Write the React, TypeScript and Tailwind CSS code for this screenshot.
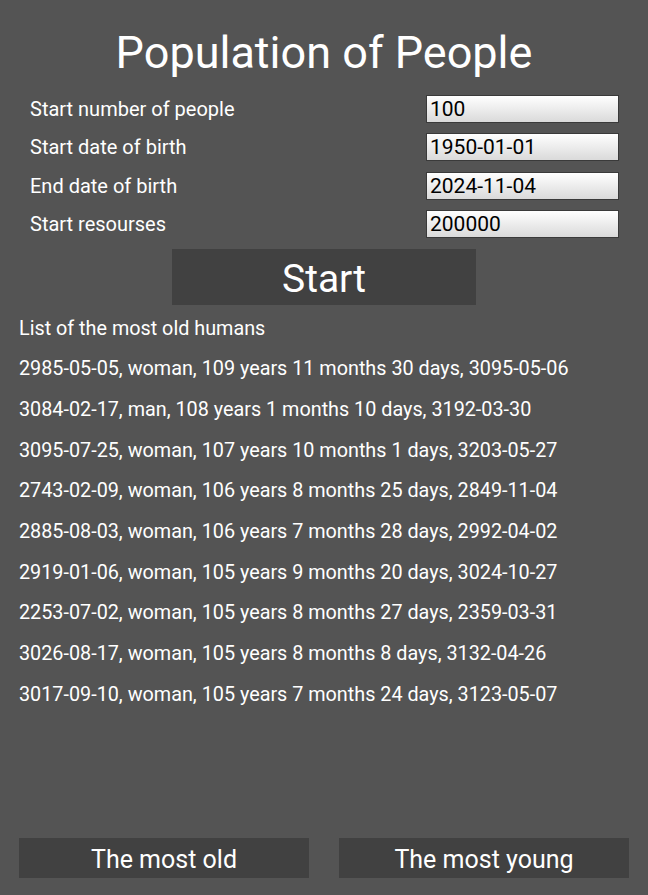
import React from "react";

const fields = [
  { label: "Start number of people", value: "100" },
  { label: "Start date of birth", value: "1950-01-01" },
  { label: "End date of birth", value: "2024-11-04" },
  { label: "Start resourses", value: "200000" },
];

const humans = [
  "2985-05-05, woman, 109 years 11 months 30 days, 3095-05-06",
  "3084-02-17, man, 108 years 1 months 10 days, 3192-03-30",
  "3095-07-25, woman, 107 years 10 months 1 days, 3203-05-27",
  "2743-02-09, woman, 106 years 8 months 25 days, 2849-11-04",
  "2885-08-03, woman, 106 years 7 months 28 days, 2992-04-02",
  "2919-01-06, woman, 105 years 9 months 20 days, 3024-10-27",
  "2253-07-02, woman, 105 years 8 months 27 days, 2359-03-31",
  "3026-08-17, woman, 105 years 8 months 8 days, 3132-04-26",
  "3017-09-10, woman, 105 years 7 months 24 days, 3123-05-07",
];

export default function App() {
  return (
    <main className="h-[895px] w-full bg-[#545454] text-white flex flex-col font-['Roboto',sans-serif]">
      <h1 className="pt-[27px] h-[78px] text-center text-[45px] leading-[52px]">
        Population of People
      </h1>

      {/* form */}
      <div className="mt-[17px] flex flex-col gap-[10.4px] pl-[30px] pr-[29px]">
        {fields.map((f) => (
          <div key={f.label} className="flex items-center justify-between h-[28px]">
            <span className="text-[20px]">{f.label}</span>
            <div className="w-[193px] h-[28px] border border-[#3a3a3a] bg-gradient-to-b from-white to-[#dadada] text-black text-[21px] leading-[26px] pl-[3px]">
              {f.value}
            </div>
          </div>
        ))}
      </div>

      <div className="mt-[11px] flex justify-center">
        <button className="w-[304px] h-[56px] bg-[#414141] text-[39px] leading-none pt-[4px]">
          Start
        </button>
      </div>

      {/* list */}
      <div className="mt-[3px] pl-[19px] flex flex-col text-[19.8px]">
        <div className="h-[40.7px] flex items-center">List of the most old humans</div>
        {humans.map((h) => (
          <div key={h} className="h-[40.7px] flex items-center">
            {h}
          </div>
        ))}
      </div>

      <div className="flex-1" />

      <div className="mb-[17px] px-[19px] flex gap-[30px]">
        <button className="flex-1 h-[40px] bg-[#414141] text-[25px] leading-none pt-[2px]">
          The most old
        </button>
        <button className="flex-1 h-[40px] bg-[#414141] text-[25px] leading-none pt-[2px]">
          The most young
        </button>
      </div>
    </main>
  );
}
